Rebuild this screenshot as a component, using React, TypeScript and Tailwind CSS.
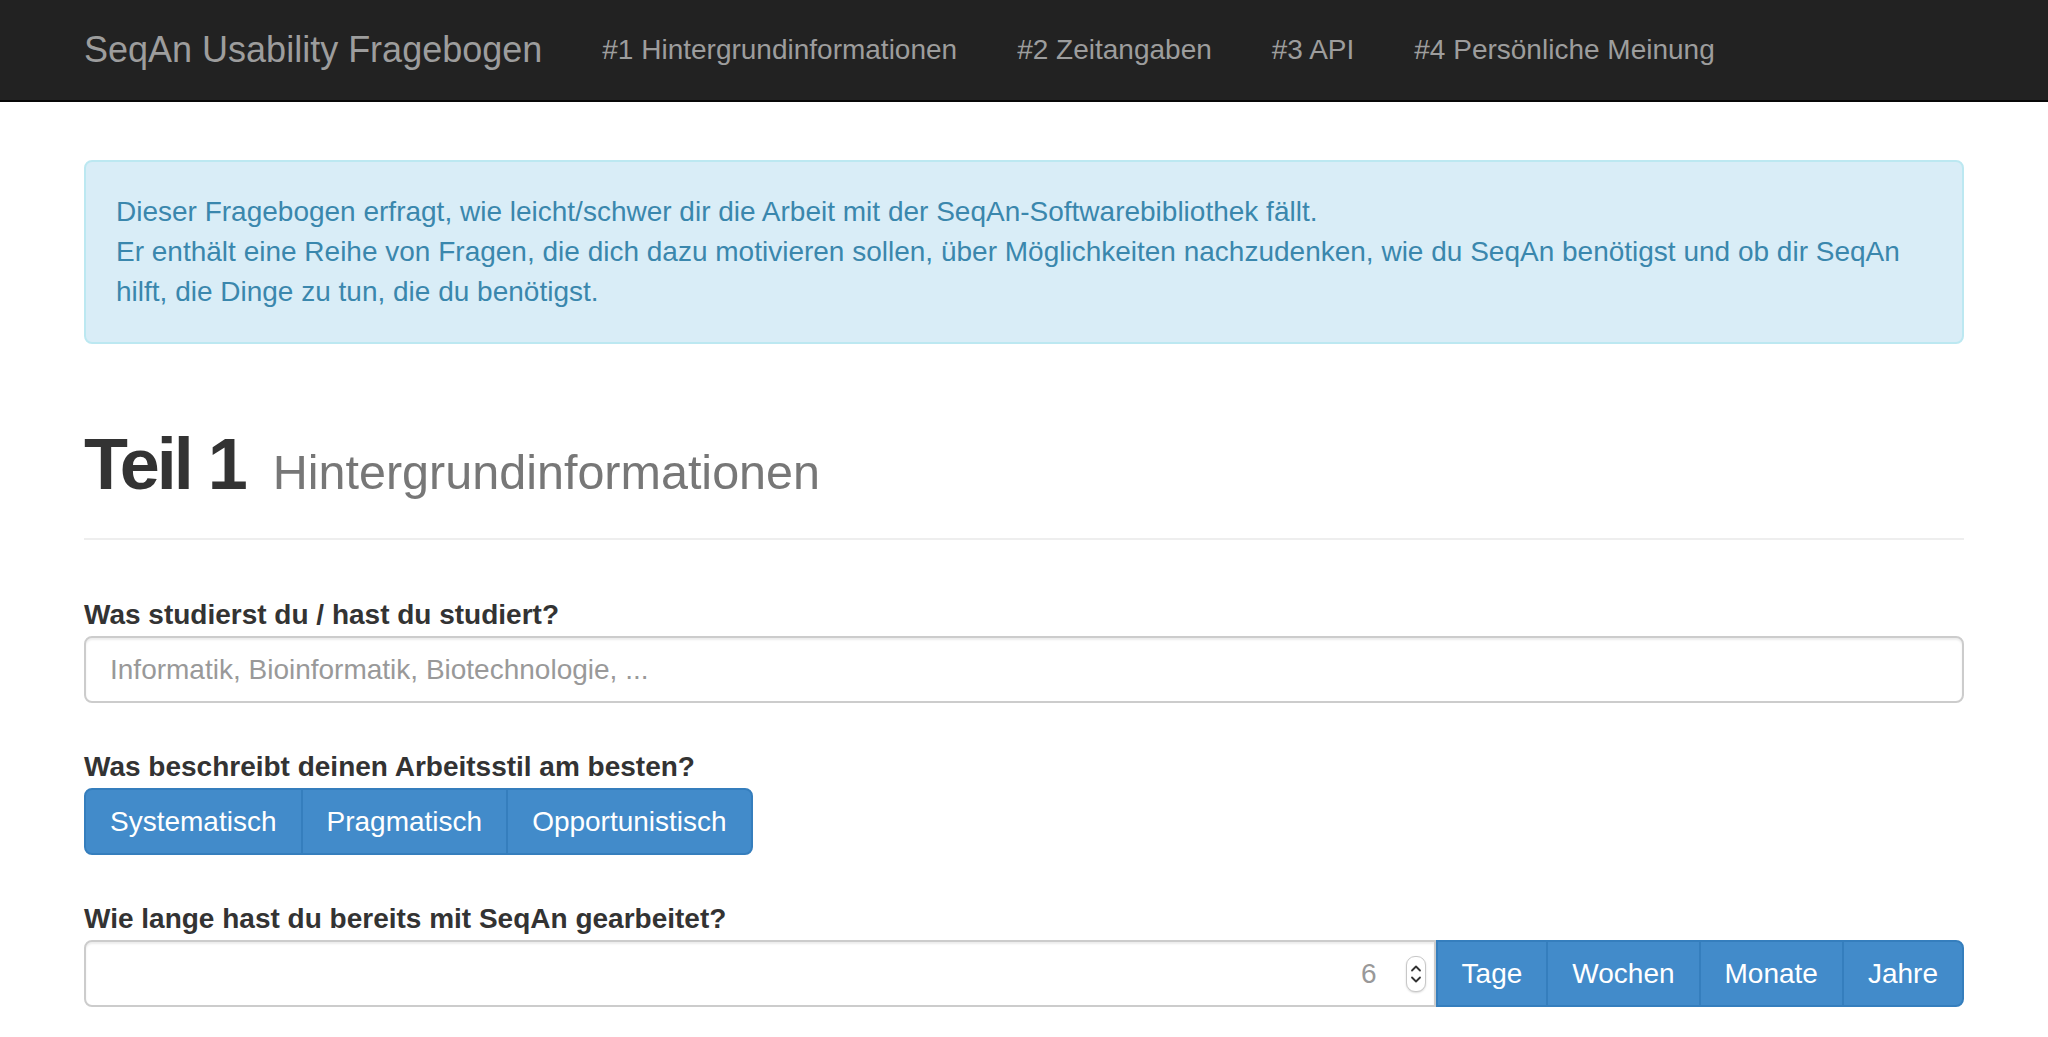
import React from "react";

const navLinks = [
  "#1 Hintergrundinformationen",
  "#2 Zeitangaben",
  "#3 API",
  "#4 Persönliche Meinung",
];

const styles = ["Systematisch", "Pragmatisch", "Opportunistisch"];
const units = ["Tage", "Wochen", "Monate", "Jahre"];

const Navbar = () => {
  return (
    <div className="h-[102px] bg-[#222] border-b-2 border-[#080808]">
      <div className="max-w-[1940px] mx-auto px-[30px] h-full flex items-center">
        <a href="#" className="text-[36px] leading-[40px] text-[#9d9d9d] mr-[30px]">
          SeqAn Usability Fragebogen
        </a>
        <nav className="flex">
          {navLinks.map((link) => (
            <a
              key={link}
              href="#"
              className="px-[30px] text-[28px] leading-[40px] text-[#9d9d9d]"
            >
              {link}
            </a>
          ))}
        </nav>
      </div>
    </div>
  );
};

const Label = ({ children }: { children: React.ReactNode }) => (
  <label className="block font-bold text-[28px] leading-[40px] text-[#333] mb-px">
    {children}
  </label>
);

const Spinner = () => (
  <div className="w-[20px] h-[36px] rounded-[9px] border border-[#c8c8c8] shadow-[0_1px_2px_rgba(0,0,0,0.15)] bg-white flex flex-col items-center justify-center gap-[4px]">
    <svg width="12" height="8" viewBox="0 0 12 8" fill="none">
      <path d="M2 6.5 L6 2.5 L10 6.5" stroke="#333" strokeWidth="1.8" strokeLinecap="round" strokeLinejoin="round" />
    </svg>
    <svg width="12" height="8" viewBox="0 0 12 8" fill="none">
      <path d="M2 1.5 L6 5.5 L10 1.5" stroke="#333" strokeWidth="1.8" strokeLinecap="round" strokeLinejoin="round" />
    </svg>
  </div>
);

export default function App() {
  return (
    <div className="min-h-screen bg-white font-['Liberation_Sans',Arial,sans-serif] text-[#333]">
      <Navbar />
      <div className="max-w-[1940px] mx-auto px-[30px] pb-[60px]">
        <div className="mt-[58px] bg-[#d9edf7] border-2 border-[#bce8f1] rounded-[8px] p-[30px] text-[#3a87ad] text-[28px] leading-[40px]">
          Dieser Fragebogen erfragt, wie leicht/schwer dir die Arbeit mit der SeqAn-Softwarebibliothek fällt.
          <br />
          Er enthält eine Reihe von Fragen, die dich dazu motivieren sollen, über Möglichkeiten nachzudenken, wie du SeqAn benötigst und ob dir SeqAn
          <br />
          hilft, die Dinge zu tun, die du benötigst.
        </div>

        <div className="mt-[81px] pb-[26px] border-b-2 border-[#eee]">
          <h1 className="text-[72px] leading-[79px] font-bold text-[#333]">
            <span className="tracking-[-3px]">Teil 1</span>{" "}
            <small className="text-[48.5px] font-normal tracking-normal text-[#777] ml-[8px]">
              Hintergrundinformationen
            </small>
          </h1>
        </div>

        <div className="mt-[55px]">
          <Label>Was studierst du / hast du studiert?</Label>
          <input
            type="text"
            placeholder="Informatik, Bioinformatik, Biotechnologie, ..."
            className="block w-full h-[67px] px-[24px] text-[28px] text-[#555] placeholder:text-[#999] border-2 border-[#ccc] rounded-[8px] shadow-[inset_0_2px_2px_rgba(0,0,0,0.075)] outline-none"
          />
        </div>

        <div className="mt-[44px]">
          <Label>Was beschreibt deinen Arbeitsstil am besten?</Label>
          <div className="flex">
            {styles.map((s, i) => (
              <button
                key={s}
                className={
                  "h-[67px] px-[24px] text-[28px] leading-[40px] text-white bg-[#428bca] border-2 border-[#357ebd] " +
                  (i === 0 ? "rounded-l-[8px]" : "-ml-[2px]") +
                  (i === styles.length - 1 ? " rounded-r-[8px]" : "")
                }
              >
                {s}
              </button>
            ))}
          </div>
        </div>

        <div className="mt-[44px]">
          <Label>Wie lange hast du bereits mit SeqAn gearbeitet?</Label>
          <div className="flex">
            <div className="flex-1 h-[67px] flex items-center justify-end pr-[8px] border-2 border-[#ccc] rounded-l-[8px] shadow-[inset_0_2px_2px_rgba(0,0,0,0.075)]">
              <span className="text-[28px] text-[#999] mr-[29px]">6</span>
              <Spinner />
            </div>
            {units.map((u, i) => (
              <button
                key={u}
                className={
                  "h-[67px] px-[24px] text-[28px] leading-[40px] text-white bg-[#428bca] border-2 border-[#357ebd] " +
                  (i === 0 ? "" : "-ml-[2px]") +
                  (i === units.length - 1 ? " rounded-r-[8px]" : "")
                }
              >
                {u}
              </button>
            ))}
          </div>
        </div>
      </div>
    </div>
  );
}
